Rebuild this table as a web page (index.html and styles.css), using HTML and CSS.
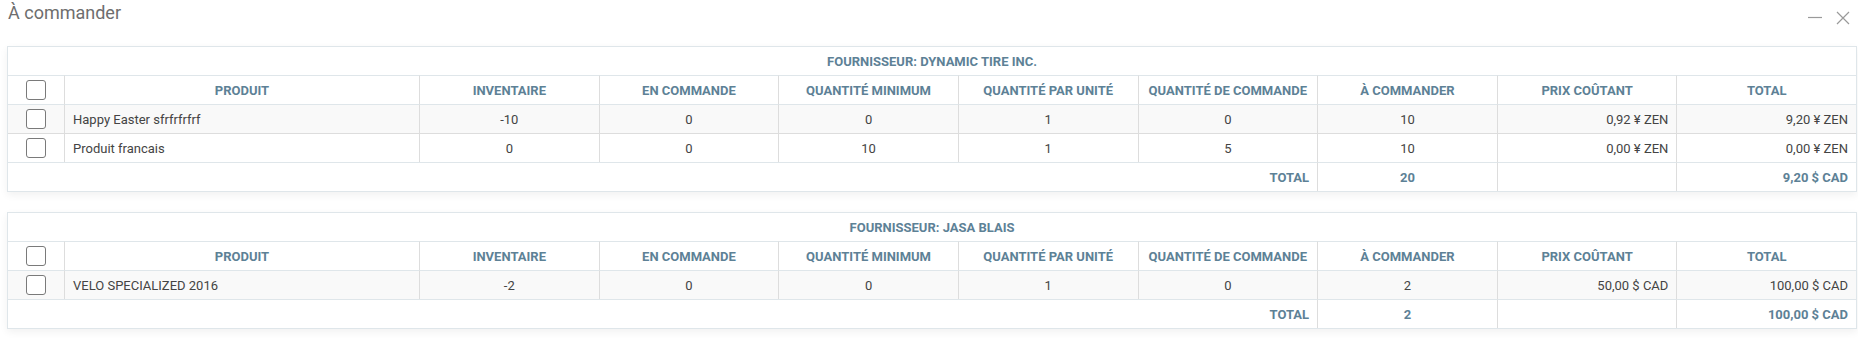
FILE: index.html
```html
<!DOCTYPE html>
<html lang="fr">
<head>
<meta charset="utf-8">
<title>À commander</title>
<link rel="stylesheet" href="styles.css">
</head>
<body>
<div class="page">
  <div class="topbar">
    <h1 class="title">À commander</h1>
    <div class="actions">
      <svg class="icon" width="14" height="14" viewBox="0 0 14 14"><path d="M0 6.5H14" stroke="#9a9a9a" stroke-width="1.2" fill="none"/></svg>
      <svg class="icon" width="14" height="14" viewBox="0 0 14 14"><path d="M1 1L13 13M13 1L1 13" stroke="#9a9a9a" stroke-width="1.2" fill="none"/></svg>
    </div>
  </div>

  <table class="grid">
    <colgroup><col class="c-check"><col class="c-prod"><col><col><col><col><col><col><col><col></colgroup>
    <thead>
      <tr class="supplier"><th colspan="10">FOURNISSEUR: DYNAMIC TIRE INC.</th></tr>
      <tr class="heads">
        <th><span class="box"></span></th>
        <th>PRODUIT</th><th>INVENTAIRE</th><th>EN COMMANDE</th><th>QUANTITÉ MINIMUM</th><th>QUANTITÉ PAR UNITÉ</th><th>QUANTITÉ DE COMMANDE</th><th>À COMMANDER</th><th>PRIX COÛTANT</th><th>TOTAL</th>
      </tr>
    </thead>
    <tbody>
      <tr class="odd">
        <td class="ck"><span class="box"></span></td>
        <td class="name">Happy Easter sfrfrfrfrf</td><td>-10</td><td>0</td><td>0</td><td>1</td><td>0</td><td>10</td><td class="money">0,92 ¥ ZEN</td><td class="money">9,20 ¥ ZEN</td>
      </tr>
      <tr>
        <td class="ck"><span class="box"></span></td>
        <td class="name">Produit francais</td><td>0</td><td>0</td><td>10</td><td>1</td><td>5</td><td>10</td><td class="money">0,00 ¥ ZEN</td><td class="money">0,00 ¥ ZEN</td>
      </tr>
    </tbody>
    <tfoot>
      <tr>
        <td colspan="7" class="money">TOTAL</td><td>20</td><td></td><td class="money">9,20 $ CAD</td>
      </tr>
    </tfoot>
  </table>

  <table class="grid">
    <colgroup><col class="c-check"><col class="c-prod"><col><col><col><col><col><col><col><col></colgroup>
    <thead>
      <tr class="supplier"><th colspan="10">FOURNISSEUR: JASA BLAIS</th></tr>
      <tr class="heads">
        <th><span class="box"></span></th>
        <th>PRODUIT</th><th>INVENTAIRE</th><th>EN COMMANDE</th><th>QUANTITÉ MINIMUM</th><th>QUANTITÉ PAR UNITÉ</th><th>QUANTITÉ DE COMMANDE</th><th>À COMMANDER</th><th>PRIX COÛTANT</th><th>TOTAL</th>
      </tr>
    </thead>
    <tbody>
      <tr class="odd">
        <td class="ck"><span class="box"></span></td>
        <td class="name">VELO SPECIALIZED 2016</td><td>-2</td><td>0</td><td>0</td><td>1</td><td>0</td><td>2</td><td class="money">50,00 $ CAD</td><td class="money">100,00 $ CAD</td>
      </tr>
    </tbody>
    <tfoot>
      <tr>
        <td colspan="7" class="money">TOTAL</td><td>2</td><td></td><td class="money">100,00 $ CAD</td>
      </tr>
    </tfoot>
  </table>
</div>
</body>
</html>
```

FILE: styles.css
```css
html, body {
  margin: 0;
  padding: 0;
  background: #ffffff;
}

.page {
  font-family: Roboto, "Liberation Sans", Arial, sans-serif;
  padding: 0 1px 0 7px;
}

.topbar {
  display: flex;
  justify-content: space-between;
  align-items: flex-start;
  height: 23px;
  padding-top: 2px;
  margin-bottom: 21px;
}

.title {
  margin: 0 0 0 1px;
  font-size: 18px;
  line-height: 21px;
  font-weight: 400;
  color: #6e6e6e;
}

.actions {
  display: flex;
  gap: 14px;
  padding-top: 9px;
  padding-right: 7px;
}

.icon {
  display: block;
}

.grid {
  width: 1850px;
  table-layout: fixed;
  border-collapse: separate;
  border-spacing: 0;
  border: 1px solid #dfe6ea;
  box-shadow: 0 3px 8px rgba(0, 0, 0, 0.06);
  margin-bottom: 20px;
  font-size: 13px;
  color: #444444;
}

.c-check { width: 56px; }
.c-prod { width: 355px; }

.grid th,
.grid td {
  height: 28px;
  padding: 0 8px;
  box-sizing: content-box;
  text-align: center;
  vertical-align: middle;
  white-space: nowrap;
  overflow: hidden;
}

.grid th + th,
.grid td + td {
  border-left: 1px solid #dddddd;
}

.supplier th {
  font-weight: 700;
  color: #5d8196;
}

.heads th {
  border-top: 1px solid #dfe6ea;
  font-weight: 700;
  color: #5d8196;
}

.grid tbody tr td {
  border-top: 1px solid #dddddd;
}

.grid tbody tr:first-child td {
  border-top-color: #dfe6ea;
}

.grid tbody tr.odd td {
  background: #f9f9f9;
}

.grid tfoot td {
  border-top: 1px solid #dfe6ea;
  font-weight: 700;
  color: #5d8196;
}

.grid td.name {
  text-align: left;
}

.grid .money {
  text-align: right;
}

.grid th:first-child,
.grid td.ck {
  padding: 0;
}

.box {
  display: block;
  width: 18px;
  height: 18px;
  margin: 0 auto;
  border: 1px solid #7a7a7a;
  border-radius: 3px;
  background: #ffffff;
}
```
